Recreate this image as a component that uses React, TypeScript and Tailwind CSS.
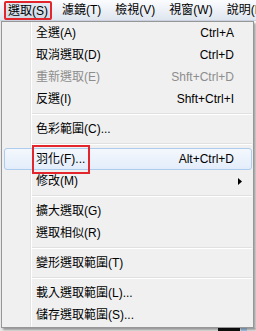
import React from "react";

type Item =
  | { type: "item"; label: string; shortcut?: string; disabled?: boolean; active?: boolean; sub?: boolean; boxed?: boolean }
  | { type: "sep" };

const items: Item[] = [
  { type: "item", label: "全選(A)", shortcut: "Ctrl+A" },
  { type: "item", label: "取消選取(D)", shortcut: "Ctrl+D" },
  { type: "item", label: "重新選取(E)", shortcut: "Shft+Ctrl+D", disabled: true },
  { type: "item", label: "反選(I)", shortcut: "Shft+Ctrl+I" },
  { type: "sep" },
  { type: "item", label: "色彩範圍(C)..." },
  { type: "sep" },
  { type: "item", label: "羽化(F)...", shortcut: "Alt+Ctrl+D", active: true, boxed: true },
  { type: "item", label: "修改(M)", sub: true },
  { type: "sep" },
  { type: "item", label: "擴大選取(G)" },
  { type: "item", label: "選取相似(R)" },
  { type: "sep" },
  { type: "item", label: "變形選取範圍(T)" },
  { type: "sep" },
  { type: "item", label: "載入選取範圍(L)..." },
  { type: "item", label: "儲存選取範圍(S)..." },
];

const font = { fontFamily: '"Liberation Sans", "Noto Sans CJK TC", sans-serif' };

function MenuRow({ it }: { it: Extract<Item, { type: "item" }> }) {
  const color = it.disabled ? "text-[#8d8d8d]" : "text-black";
  if (it.active) {
    return (
      <div
        className={
          "flex h-[22px] items-center mx-[2px] mr-[1px] pl-[31px] pr-[17px] rounded-[3px] border border-[#aeccee] bg-gradient-to-b from-[#f4f8fd] to-[#e3edfa] whitespace-nowrap " +
          color
        }
      >
        <span className="relative">
          {it.label}
          {it.boxed && (
            <span className="absolute left-[-4px] right-[-5px] top-[-5px] bottom-[-6px] border-2 border-[#e3262b]" />
          )}
        </span>
        <span className="ml-auto">{it.shortcut ?? ""}</span>
      </div>
    );
  }
  return (
    <div className={"flex h-[22px] items-center pl-[34px] pr-[19px] whitespace-nowrap " + color}>
      <span>{it.label}</span>
      <span className="ml-auto">{it.shortcut ?? ""}</span>
      {it.sub && (
        <svg className="mr-[-8px]" width="4" height="7" viewBox="0 0 4 7">
          <path d="M0 0 L4 3.5 L0 7 Z" fill="#000" />
        </svg>
      )}
    </div>
  );
}

export default function App() {
  return (
    <div
      className="relative flex flex-col w-[256px] h-[331px] overflow-hidden bg-[#e9e9e9] text-[12px] text-black"
      style={font}
    >
      {/* Menu bar */}
      <div className="flex h-[21px] shrink-0 items-stretch gap-[6px] pl-[4px] bg-gradient-to-b from-[#fbfcfe] to-[#dfe6ef] border-b border-[#c9d2de]">
        {["選取(S)", "濾鏡(T)", "檢視(V)", "視窗(W)", "說明(H)"].map((t, i) => (
          <div
            key={t}
            className={
              i === 0
                ? "flex items-center px-[2px] mt-[1px] border-2 border-[#e3262b] rounded-[2px] bg-gradient-to-b from-[#e4eaf2] to-[#cfd9e6] whitespace-nowrap"
                : "flex items-center px-[4px] whitespace-nowrap"
            }
          >
            {t}
          </div>
        ))}
      </div>

      {/* underlying page */}
      <div className="flex flex-1 flex-col">
        <div className="flex flex-1">
          <div className="flex-1" />
          <div className="w-[3px] bg-white" />
        </div>
        <div className="flex h-[3px] gap-[1px]">
          <div className="w-[217px]" />
          <div className="w-[22px] bg-[#111]" />
          <div className="w-[6px] bg-[#a9cdf0]" />
        </div>
      </div>

      {/* Dropdown menu (overlay) */}
      <div className="absolute left-[1px] top-[21px] w-[253px] border border-[#979797] shadow-[2px_2px_2px_rgba(0,0,0,0.35)] pb-[1px] bg-[linear-gradient(to_right,#f0f0f0_28px,#e2e3e3_28px,#e2e3e3_29px,#ffffff_29px,#ffffff_30px,#f0f0f0_30px)]">
        <div className="flex flex-col">
          {items.map((it, idx) =>
            it.type === "sep" ? (
              <div key={idx} className="h-[8px] flex flex-col justify-center pl-[30px] pr-[1px]">
                <div className="h-px bg-[#e0e0e0]" />
                <div className="h-px bg-white" />
              </div>
            ) : (
              <MenuRow key={idx} it={it} />
            )
          )}
        </div>
      </div>
    </div>
  );
}
